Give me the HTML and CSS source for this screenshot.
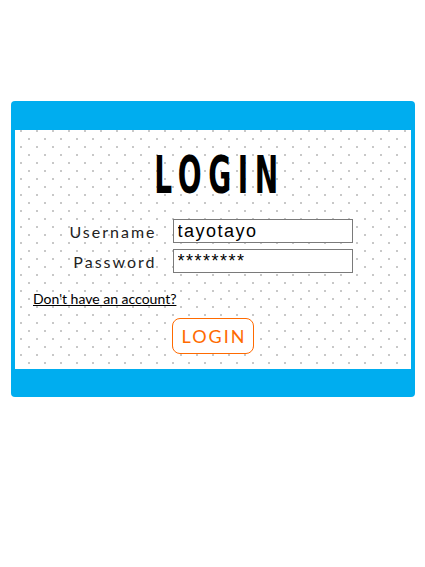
FILE: index.html
```html
<!DOCTYPE html>
<html>
<head>
<meta charset="utf-8">
<link rel="stylesheet" href="styles.css">
</head>
<body>
<div class="frame">
  <div class="panel">
    <h1 class="title"><span class="title-text">LOGIN</span></h1>
    <form class="form">
      <label class="label" for="u">Username</label>
      <input class="field" id="u" type="text" value="tayotayo">
      <label class="label" for="p">Password</label>
      <input class="field" id="p" type="text" value="********">
    </form>
    <div class="signup"><a class="signup-link" href="#">Don't have an account?</a></div>
    <div class="actions"><button class="btn" type="button">LOGIN</button></div>
  </div>
</div>
</body>
</html>
```
FILE: styles.css
```css
html, body {
  margin: 0;
  padding: 0;
  background: #fff;
}
.frame {
  margin: 101px 0 0 11px;
  width: 404px;
  box-sizing: border-box;
  padding: 29px 4px 28px;
  background: #00adef;
  border-radius: 4px;
}
.panel {
  height: 239px;
  background-color: #fff;
  background-image:
    radial-gradient(circle, #c8c8c8 1px, transparent 1.2px),
    radial-gradient(circle, #c8c8c8 1px, transparent 1.2px);
  background-size: 16px 16px, 16px 16px;
  background-position: -2px -7px, 6px 1px;
  overflow: hidden;
}
.title {
  margin: 19px 0 0;
  padding-left: 6px;
  height: 52px;
  text-align: center;
  font-family: "DejaVu Sans Condensed", "DejaVu Sans", sans-serif;
  font-weight: bold;
  font-size: 52px;
  line-height: 52px;
}
.title-text {
  display: inline-block;
  letter-spacing: 11px;
  padding-left: 11px;
  transform: scaleX(0.6);
  color: #000;
}
.form {
  margin: 18px 0 0;
  display: grid;
  grid-template-columns: auto 180px;
  justify-content: center;
  column-gap: 16px;
  row-gap: 6px;
  align-items: center;
  padding-right: 4px;
}
.label {
  text-align: right;
  font-family: Lato, "Open Sans", sans-serif;
  font-size: 16px;
  letter-spacing: 2px;
  color: #222;
}
.field {
  box-sizing: border-box;
  width: 180px;
  height: 24px;
  margin: 0;
  padding: 0 4px;
  border: 1px solid #7a7a7a;
  background: #fff;
  font-family: "Liberation Sans", Arial, sans-serif;
  font-size: 18px;
  letter-spacing: 1.5px;
  color: #000;
  outline: none;
}
.signup {
  margin-top: 17px;
  padding-left: 18px;
  font-family: Lato, "Open Sans", sans-serif;
  font-size: 14px;
  line-height: 17px;
}
.signup-link {
  color: #000;
  text-decoration: underline;
}
.actions {
  margin-top: 11px;
  display: flex;
  justify-content: center;
}
.btn {
  box-sizing: border-box;
  width: 82px;
  height: 36px;
  padding: 0 0 0 2px;
  border: 1px solid #ff6a00;
  border-radius: 8px;
  background: #fff;
  color: #ff6a00;
  font-family: Lato, "Open Sans", sans-serif;
  font-size: 18px;
  letter-spacing: 2px;
}
```
